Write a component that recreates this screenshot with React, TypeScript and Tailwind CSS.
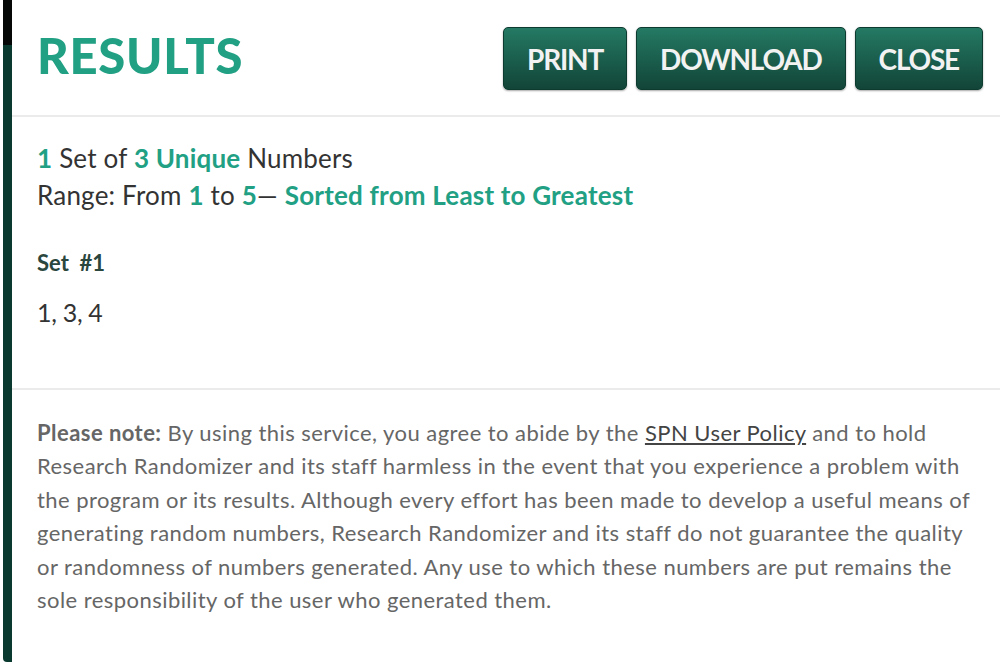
import React from "react";

const teal = "text-[#21a084] font-bold";

function ActionButton({ label }: { label: string }) {
  return (
    <button className="h-[63px] px-[23px] rounded-[5px] border border-[#0e3b30] bg-gradient-to-b from-[#247a64] to-[#124538] text-[#f2f2f2] text-[28px] font-bold tracking-[-1.2px] shadow-[0_1px_2px_rgba(0,0,0,0.35)]">
      {label}
    </button>
  );
}

export default function App() {
  const note = [
    <>
      <span className="font-bold">Please note:</span> By using this service, you agree to abide by the{" "}
      <span className="underline text-[#444]">SPN User Policy</span> and to hold
    </>,
    <>Research Randomizer and its staff harmless in the event that you experience a problem with</>,
    <>the program or its results. Although every effort has been made to develop a useful means of</>,
    <>generating random numbers, Research Randomizer and its staff do not guarantee the quality</>,
    <>or randomness of numbers generated. Any use to which these numbers are put remains the</>,
    <>sole responsibility of the user who generated them.</>,
  ];

  return (
    <div
      className="w-[1000px] h-[666px] bg-white flex overflow-hidden"
      style={{ fontFamily: "Lato, 'Open Sans', sans-serif" }}
    >
      {/* backdrop sliver on the left */}
      <div className="w-[3px] bg-white" />
      <div className="w-[9px] h-[662px] flex flex-col rounded-bl-[4px] overflow-hidden">
        <div className="h-[45px] bg-[#050807]" />
        <div className="flex-1 bg-[#0a3a2f]" />
      </div>

      {/* dialog */}
      <div className="flex-1 flex flex-col bg-white rounded-tl-[4px]">
        <header className="h-[117px] flex items-center justify-between pl-[25px] pr-[17px] border-b-2 border-[#ebebeb]">
          <h1 className="text-[49px] font-black text-[#21a084] tracking-[0.7px] leading-none mt-[-4px]">
            RESULTS
          </h1>
          <div className="flex gap-[9px] mt-[2px]">
            <ActionButton label="PRINT" />
            <ActionButton label="DOWNLOAD" />
            <ActionButton label="CLOSE" />
          </div>
        </header>

        <section className="h-[273px] pl-[25px] pt-[23px] border-b-2 border-[#ebebeb] text-[#333] text-[26px]">
          <p className="leading-[37px] tracking-[0.2px]">
            <span className={teal}>1</span> Set of <span className={teal}>3 Unique</span> Numbers
          </p>
          <p className="leading-[37px] tracking-[0.2px]">
            Range: From <span className={teal}>1</span> to <span className={teal}>5</span>—{" "}
            <span className={teal}>Sorted from Least to Greatest</span>
          </p>
          <p className="mt-[36px] text-[22px] font-bold text-[#2a463d] leading-[26px] whitespace-pre">
            Set  #1
          </p>
          <p className="mt-[21px] text-[25px] leading-[30px] tracking-[-0.3px]">1, 3, 4</p>
        </section>

        <section className="pl-[25px] pt-[26px] text-[22px] tracking-[0.45px] text-[#666] leading-[33.4px]">
          {note.map((line, i) => (
            <div key={i} className="whitespace-nowrap">
              {line}
            </div>
          ))}
        </section>
      </div>
    </div>
  );
}
